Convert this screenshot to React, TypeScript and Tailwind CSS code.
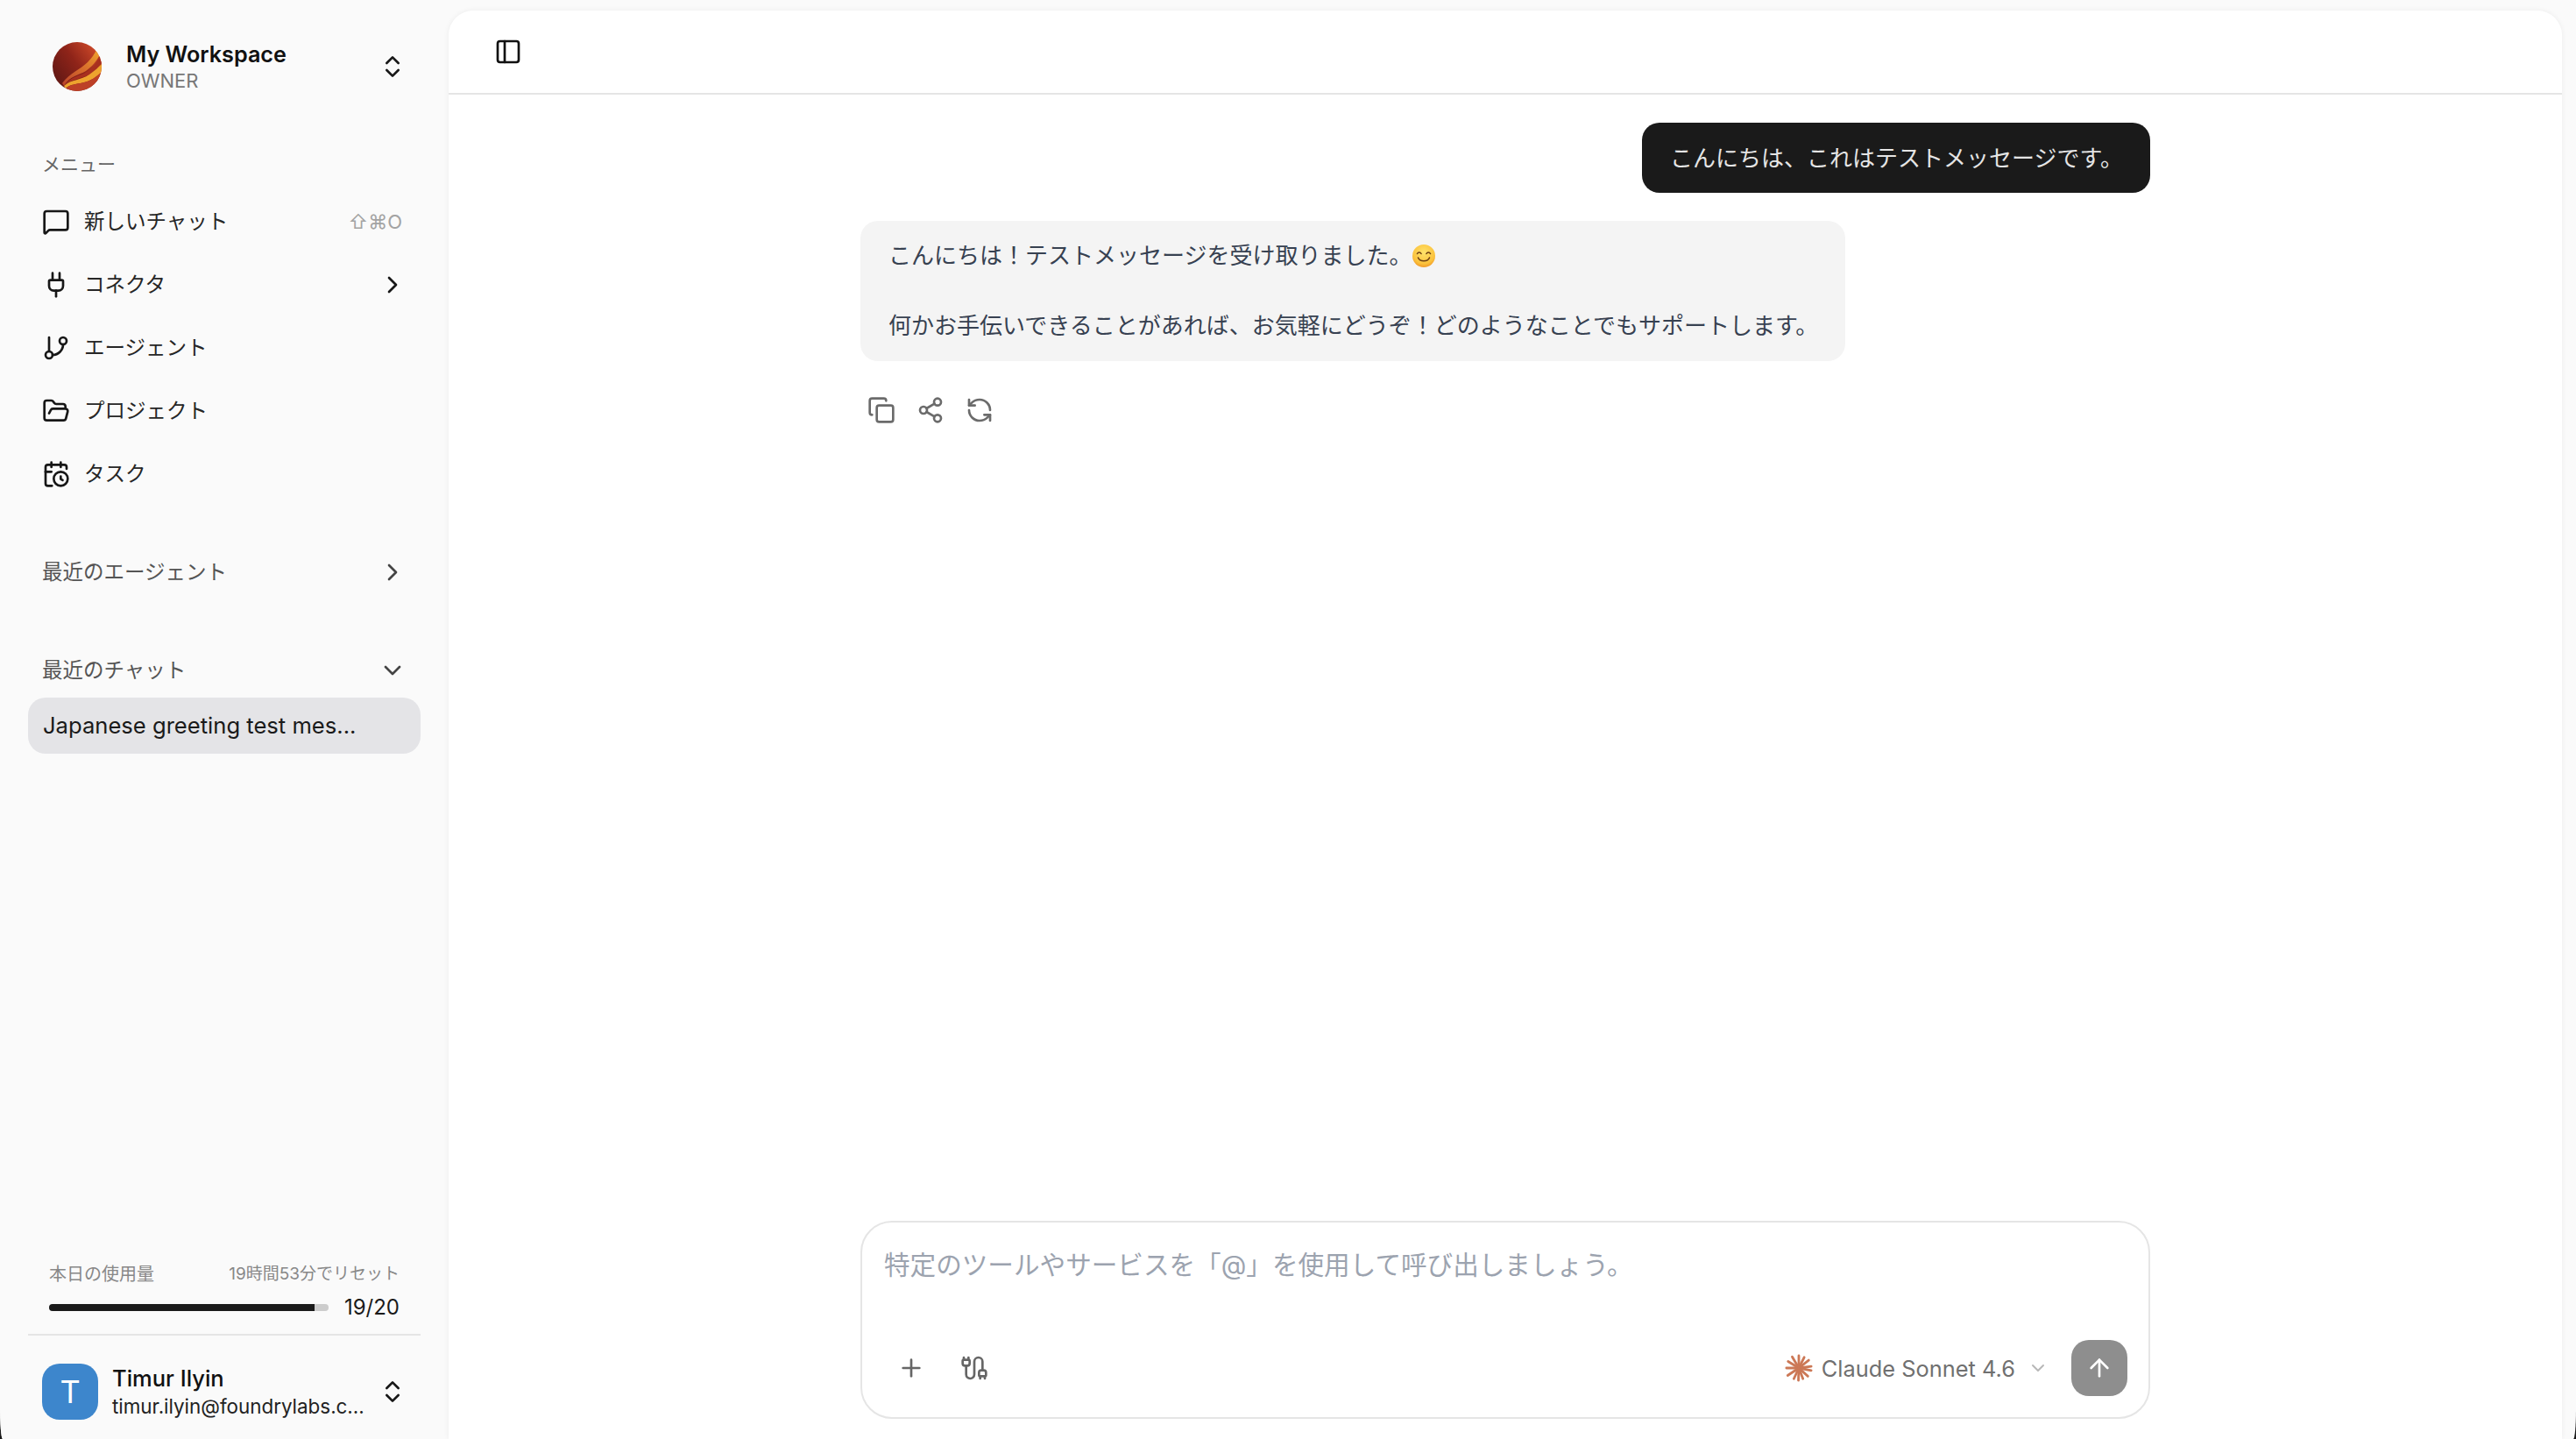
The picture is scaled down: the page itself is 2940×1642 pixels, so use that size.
import {
  ArrowUp,
  Cable,
  CalendarClock,
  ChevronDown,
  ChevronRight,
  ChevronsUpDown,
  Copy,
  FolderOpen,
  GitBranch,
  MessageSquare,
  PanelLeft,
  Plug,
  Plus,
  RefreshCcw,
  Share2,
} from "lucide-react";
import type { ReactNode } from "react";

function WorkspaceLogo() {
  return (
    <svg width="56" height="56" viewBox="0 0 56 56" className="shrink-0">
      <defs>
        <linearGradient id="ball" x1="0" y1="0.8" x2="1" y2="0.1">
          <stop offset="0" stopColor="#5e1714" />
          <stop offset="0.5" stopColor="#8f2419" />
          <stop offset="1" stopColor="#d9502c" />
        </linearGradient>
        <linearGradient id="swoosh" x1="0" y1="1" x2="1" y2="0">
          <stop offset="0" stopColor="#b8412a" />
          <stop offset="0.55" stopColor="#d9702c" />
          <stop offset="1" stopColor="#f0a52f" />
        </linearGradient>
        <clipPath id="ballClip">
          <circle cx="28" cy="28" r="28" />
        </clipPath>
      </defs>
      <circle cx="28" cy="28" r="28" fill="url(#ball)" />
      <g clipPath="url(#ballClip)">
        <path d="M11 47C20 35 32 31 40 23C45 18 48 13 50 9L54 14C50 22 45 28 38 33C30 38 20 38 13 50Z" fill="url(#swoosh)" />
        <path d="M13 50C22 38 31 39 39 34C46 30 50 24 54 15L57 26C52 30 48 34 42 37C32 42 22 42 13 50Z" fill="#a8301f" />
        <path d="M13 50C22 42 32 44 42 37C48 33 53 28 56 25L57 33C50 40 44 44 36 46C28 48 20 48 15 53Z" fill="#eea32e" />
        <path d="M15 53C20 48 28 48 36 46C44 44 50 40 57 33V58H15Z" fill="#bd4027" />
      </g>
    </svg>
  );
}

function SmileEmoji() {
  return (
    <svg width="28" height="28" viewBox="0 0 28 28" className="inline-block align-[-5px]">
      <defs>
        <radialGradient id="face" cx="50%" cy="35%" r="70%">
          <stop offset="0" stopColor="#ffe36b" />
          <stop offset="0.7" stopColor="#fbc23c" />
          <stop offset="1" stopColor="#ee8f24" />
        </radialGradient>
      </defs>
      <circle cx="14" cy="14" r="13" fill="url(#face)" />
      <path d="M6.5 11.5C7.5 9.5 10 9.5 11 11.5M17 11.5C18 9.5 20.5 9.5 21.5 11.5" fill="none" stroke="#6d3f12" strokeWidth="1.6" strokeLinecap="round" />
      <path d="M7.5 16C9.5 21 18.5 21 20.5 16" fill="none" stroke="#6d3f12" strokeWidth="1.6" strokeLinecap="round" />
    </svg>
  );
}

function ClaudeStar() {
  return (
    <svg width="32" height="32" viewBox="0 0 34 34" className="shrink-0" stroke="#cc7856" strokeWidth="3" strokeLinecap="round">
      <path d="M17 17L17 2" />
      <path d="M17 17L23.5 4" />
      <path d="M17 17L29 7.5" />
      <path d="M17 17L32 15" />
      <path d="M17 17L32 20" />
      <path d="M17 17L28 27" />
      <path d="M17 17L22 30" />
      <path d="M17 17L16.5 32" />
      <path d="M17 17L11 30" />
      <path d="M17 17L3.5 26" />
      <path d="M17 17L2 17" />
      <path d="M17 17L4 9" />
      <path d="M17 17L9 3.5" />
    </svg>
  );
}

function NavItem({ icon, label, right }: { icon: ReactNode; label: string; right?: ReactNode }) {
  return (
    <div className="h-[72px] flex items-center pl-[48px] pr-[48px]">
      <span className="w-[32px] h-[32px] shrink-0 text-[#171717]">{icon}</span>
      <span className="ml-[16px] flex-1 text-[23.5px] text-[#262626]">{label}</span>
      {right}
    </div>
  );
}

function SectionHeading({ label, icon, className }: { label: string; icon: ReactNode; className: string }) {
  return (
    <div className={`h-[48px] flex items-center justify-between pl-[48px] pr-[48px] text-[23.5px] text-[#555555] ${className}`}>
      <span>{label}</span>
      {icon}
    </div>
  );
}

function Sidebar() {
  return (
    <aside className="w-[512px] shrink-0 flex flex-col bg-[#fafafa]">
      {/* Workspace switcher */}
      <div className="mt-[32px] h-[88px] flex items-center pl-[60px] pr-[48px]">
        <WorkspaceLogo />
        <div className="ml-[28px] flex-1">
          <div className="text-[25.2px] leading-[32px] font-semibold text-[#111111]">My Workspace</div>
          <div className="text-[22px] leading-[28px] text-[#777777]">OWNER</div>
        </div>
        <ChevronsUpDown size={32} className="text-[#171717]" />
      </div>

      <div className="mt-[52px] h-[32px] pl-[48px] text-[21px] leading-[32px] text-[#666666]">メニュー</div>

      <nav className="mt-[13px]">
        <NavItem
          icon={<MessageSquare size={32} />}
          label="新しいチャット"
          right={<span className="text-[22px] text-[#a3a3a3] mr-[5px]">⇧⌘O</span>}
        />
        <NavItem icon={<Plug size={32} />} label="コネクタ" right={<ChevronRight size={32} className="text-[#171717]" />} />
        <NavItem icon={<GitBranch size={32} />} label="エージェント" />
        <NavItem icon={<FolderOpen size={32} />} label="プロジェクト" />
        <NavItem icon={<CalendarClock size={32} />} label="タスク" />
      </nav>

      <SectionHeading className="mt-[52px]" label="最近のエージェント" icon={<ChevronRight size={32} className="text-[#444444]" />} />
      <SectionHeading className="mt-[64px]" label="最近のチャット" icon={<ChevronDown size={32} className="text-[#444444]" />} />

      <div className="mt-[7px] mx-[32px] h-[64px] rounded-[20px] bg-[#e4e4e7] flex items-center pl-[17px] text-[25.6px] text-[#1a1a1a]">
        Japanese greeting test mes...
      </div>

      <div className="flex-1" />

      {/* Usage */}
      <div className="px-[56px] flex items-center justify-between h-[28px]">
        <span className="text-[20px] text-[#888888]">本日の使用量</span>
        <span className="text-[19px] text-[#888888]">19時間53分でリセット</span>
      </div>
      <div className="mt-[10px] pl-[56px] pr-[56px] flex items-center h-[28px]">
        <div className="w-[319px] h-[8px] rounded-full bg-[#cccccc] overflow-hidden">
          <div className="h-full w-[95%] bg-[#1a1a1a]" />
        </div>
        <span className="ml-auto text-[24px] text-[#1a1a1a]">19/20</span>
      </div>
      <div className="mt-[16px] mx-[32px] h-[2px] bg-[#e5e5e5]" />

      {/* Account */}
      <div className="mt-[32px] mb-[22px] h-[64px] flex items-center pl-[48px] pr-[48px]">
        <div className="w-[64px] h-[64px] rounded-[20px] bg-[#3d86cc] flex items-center justify-center text-[36px] text-white shrink-0">T</div>
        <div className="ml-[16px] flex-1 min-w-0">
          <div className="text-[25.5px] leading-[34px] font-medium text-[#111111]">Timur Ilyin</div>
          <div className="text-[22.4px] leading-[30px] text-[#222222]">timur.ilyin@foundrylabs.c...</div>
        </div>
        <ChevronsUpDown size={32} className="text-[#171717] shrink-0" />
      </div>
    </aside>
  );
}

function Composer() {
  return (
    <div className="w-[1472px] h-[226px] mx-auto border-2 border-[#e5e5e5] rounded-[36px] bg-white flex flex-col pl-[25px] pr-[24px]">
      <div className="mt-[28px] text-[29.6px] leading-[40px] text-[#9ca3af]">
        特定のツールやサービスを「@」を使用して呼び出しましょう。
      </div>
      <div className="mt-auto mb-[24px] flex items-center">
        <Plus size={32} className="ml-[15px] text-[#666666]" />
        <Cable size={32} className="ml-[40px] text-[#666666]" />
        <div className="ml-auto flex items-center">
          <ClaudeStar />
          <span className="ml-[10px] mt-[2px] text-[25.4px] text-[#707070]">Claude Sonnet 4.6</span>
          <ChevronDown size={24} className="ml-[14px] text-[#b8b8b8]" />
          <div className="ml-[26px] w-[64px] h-[64px] rounded-[20px] bg-[#8e8e8e] flex items-center justify-center">
            <ArrowUp size={32} className="text-white" />
          </div>
        </div>
      </div>
    </div>
  );
}

function Conversation() {
  return (
    <div className="flex-1 min-h-0 w-[1472px] mx-auto">
      <div className="mt-[32px] flex justify-end">
        <div className="w-[580px] h-[80px] rounded-[20px] bg-[#1a1a1a] px-[32px] pt-[21px] text-[26px] leading-[40px] text-[#e5e5e5] whitespace-nowrap">
          こんにちは、これはテストメッセージです。
        </div>
      </div>
      <div className="mt-[32px] w-[1124px] h-[160px] rounded-[20px] bg-[#f4f4f4] px-[32px] py-[20px] text-[26px] leading-[40px] text-[#374151] whitespace-nowrap">
        <p>
          {"こんにちは\uFF01テストメッセージを受け取りました。"}
          <SmileEmoji />
        </p>
        <p className="mt-[40px]">{"何かお手伝いできることがあれば、お気軽にどうぞ\uFF01どのようなことでもサポートします。"}</p>
      </div>
      <div className="mt-[40px] pl-[8px] flex gap-[24px] text-[#6b6b6b]">
        <Copy size={32} />
        <Share2 size={32} />
        <RefreshCcw size={32} />
      </div>
    </div>
  );
}

export default function App() {
  return (
    <div className="h-[1642px] w-[2940px] bg-[#1a1a1a]">
      <div className="h-full w-full flex overflow-hidden bg-[#fafafa] rounded-bl-[3px_38px] rounded-br-[3px_34px] font-['Inter','Noto_Sans_CJK_JP',sans-serif]">
        <Sidebar />
        <main className="flex-1 mt-[12px] mr-[16px] rounded-t-[28px] bg-white flex flex-col shadow-[0_0_6px_rgba(0,0,0,0.06)]">
          <header className="h-[96px] shrink-0 border-b-2 border-[#e5e5e5] flex items-center pl-[52px] text-[#111111]">
            <PanelLeft size={32} />
          </header>
          <Conversation />
          <div className="mb-[23px]">
            <Composer />
          </div>
        </main>
      </div>
    </div>
  );
}
